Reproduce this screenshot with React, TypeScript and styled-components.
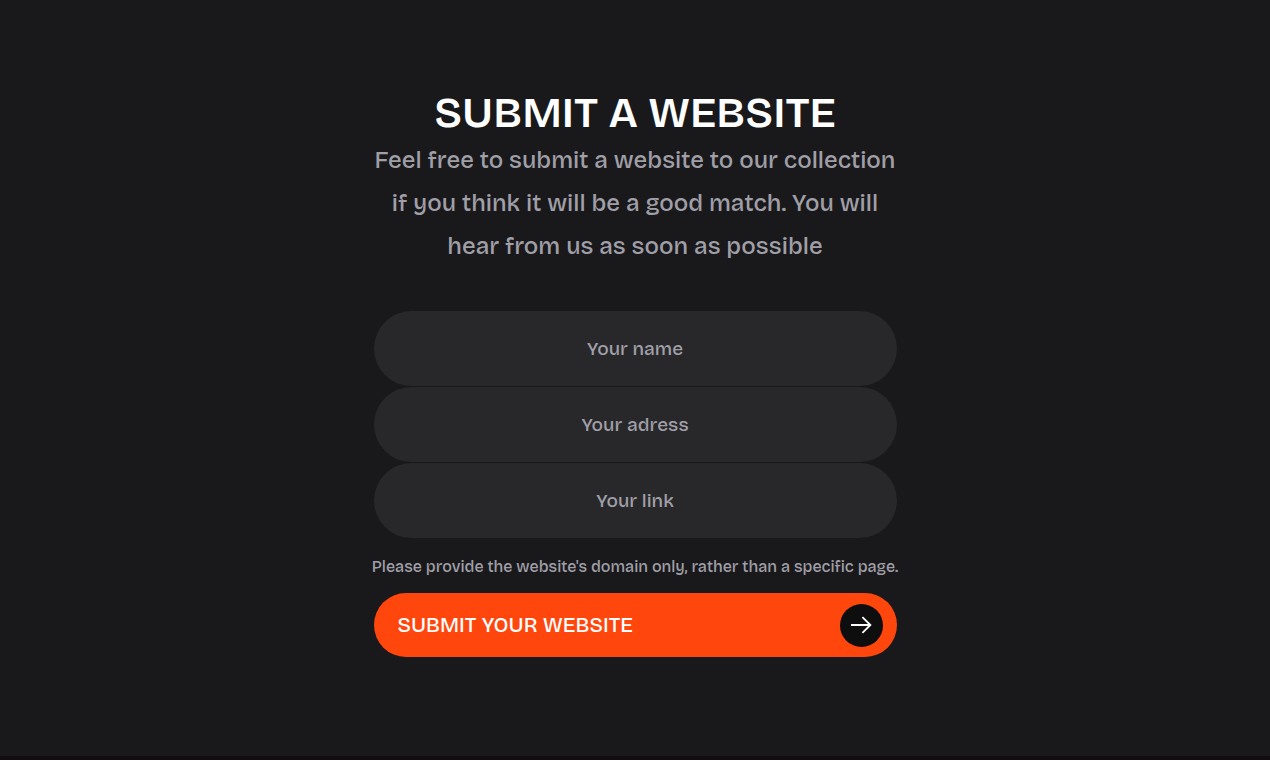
import React from "react";
import styled, { createGlobalStyle } from "styled-components";

const GlobalStyle = createGlobalStyle`
  *, *::before, *::after { box-sizing: border-box; }
  body {
    margin: 0;
    background: #19191b;
    color: #ffffff;
    font-family: "Bricolage Grotesque", Inter, sans-serif;
    font-weight: 500;
  }
`;

const Page = styled.main`
  display: flex;
  flex-direction: column;
  align-items: center;
  min-height: 100vh;
  padding: 87px 24px 96px;
  border-bottom: 4px solid #120c10;
`;

const Intro = styled.header`
  width: 100%;
  max-width: 523px;
  text-align: center;
`;

const Title = styled.h1`
  margin: 0;
  font-size: 43px;
  font-weight: 600;
  line-height: 52px;
`;

const Lead = styled.p`
  margin: 0;
  color: #a09fa8;
  font-size: 24px;
  line-height: 43px;
`;

const Form = styled.form`
  display: flex;
  flex-direction: column;
  width: 100%;
  max-width: 523px;
  margin-top: 43px;
`;

const Fields = styled.div`
  display: grid;
  gap: 1px;
`;

const Field = styled.input`
  width: 100%;
  height: 75px;
  padding: 0 32px;
  border: 0;
  border-radius: 38px;
  background: #28282a;
  color: #ffffff;
  font: inherit;
  font-size: 19px;
  text-align: center;

  &::placeholder {
    color: #a09fa8;
    opacity: 1;
  }

  &:focus-visible {
    outline: 2px solid #ff460c;
  }
`;

const Note = styled.p`
  margin: 17px -8px 14px;
  color: #a09fa8;
  font-size: 16px;
  line-height: 24px;
  text-align: center;
`;

const SubmitButton = styled.button`
  display: flex;
  align-items: center;
  justify-content: space-between;
  height: 64px;
  padding: 0 14px 0 24px;
  border: 0;
  border-radius: 32px;
  background: #ff460c;
  color: #ffffff;
  font: inherit;
  font-size: 21px;
  cursor: pointer;
`;

const ArrowBadge = styled.span`
  display: grid;
  place-items: center;
  width: 43px;
  height: 43px;
  border-radius: 50%;
  background: #0e0e0f;
`;

const fields = [
  { name: "name", label: "Your name", type: "text" },
  { name: "address", label: "Your adress", type: "text" },
  { name: "link", label: "Your link", type: "url" },
];

const Arrow = () => (
  <svg width="22" height="18" viewBox="0 0 22 18" fill="none" stroke="#fff" strokeWidth="1.8" aria-hidden="true">
    <path d="M1 9H20.6M12.4 1.2L20.4 9L12.4 16.8" />
  </svg>
);

export default function App() {
  return (
    <>
      <GlobalStyle />
      <Page>
        <Intro>
          <Title>SUBMIT A WEBSITE</Title>
          <Lead>
            Feel free to submit a website to our collection if you think it will be a good match. You will hear from us
            as soon as possible
          </Lead>
        </Intro>
        <Form onSubmit={(event) => event.preventDefault()}>
          <Fields>
            {fields.map((field) => (
              <Field
                key={field.name}
                name={field.name}
                type={field.type}
                placeholder={field.label}
                aria-label={field.label}
              />
            ))}
          </Fields>
          <Note>Please provide the website's domain only, rather than a specific page.</Note>
          <SubmitButton type="submit">
            SUBMIT YOUR WEBSITE
            <ArrowBadge>
              <Arrow />
            </ArrowBadge>
          </SubmitButton>
        </Form>
      </Page>
    </>
  );
}
